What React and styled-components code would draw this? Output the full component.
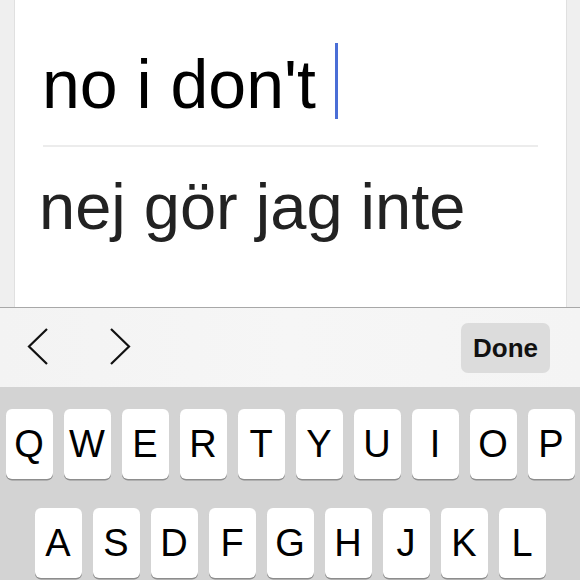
import React from 'react'
import styled, { createGlobalStyle } from 'styled-components'

const rows = [
    ['Q', 'W', 'E', 'R', 'T', 'Y', 'U', 'I', 'O', 'P'],
    ['A', 'S', 'D', 'F', 'G', 'H', 'J', 'K', 'L'],
]

export default function App() {
    return (
        <>
            <GlobalStyle />
            <Screen>
                <CardArea>
                    <Card>
                        <InputRow>
                            <InputText>no i don't</InputText>
                            <Caret />
                        </InputRow>
                        <Divider />
                        <Translation>nej gör jag inte</Translation>
                    </Card>
                </CardArea>
                <Toolbar>
                    <ArrowButton aria-label="previous">
                        <svg width="22" height="37" viewBox="0 0 22 37">
                            <polyline points="20,1 2,18.5 20,36" fill="none" stroke="#111" strokeWidth="2.2" />
                        </svg>
                    </ArrowButton>
                    <ArrowButton aria-label="next">
                        <svg width="22" height="37" viewBox="0 0 22 37">
                            <polyline points="2,1 20,18.5 2,36" fill="none" stroke="#111" strokeWidth="2.2" />
                        </svg>
                    </ArrowButton>
                    <Spacer />
                    <DoneButton>Done</DoneButton>
                </Toolbar>
                <Keyboard>
                    {rows.map((row, i) => (
                        <KeyRow key={i}>
                            {row.map(k => (
                                <Key key={k}>{k}</Key>
                            ))}
                        </KeyRow>
                    ))}
                </Keyboard>
            </Screen>
        </>
    )
}

const GlobalStyle = createGlobalStyle`
    body {
        margin: 0;
        font-family: "Liberation Sans", Arial, sans-serif;
        background: #d3d3d3;
    }
`

const Screen = styled.div`
    width: 580px;
    height: 580px;
    overflow: hidden;
    display: flex;
    flex-direction: column;
`

const CardArea = styled.div`
    height: 307px;
    flex-shrink: 0;
    background: #efefef;
    padding: 0 13px 0 14px;
    display: flex;
`

const Card = styled.div`
    flex: 1;
    background: #fff;
    border-left: 1px solid #e0e0e0;
    border-right: 1px solid #e0e0e0;
    padding: 46px 28px 0;
`

const InputRow = styled.div`
    display: flex;
    align-items: flex-start;
`

const InputText = styled.span`
    font-size: 68px;
    line-height: 76px;
    color: #000;
    margin-left: -1px;
`

const Caret = styled.span`
    width: 3px;
    height: 76px;
    margin: -3px 0 0 19px;
    background: #4a6ed6;
`

const Divider = styled.div`
    height: 2px;
    background: #ececec;
    margin-top: 23px;
`

const Translation = styled.div`
    font-size: 65px;
    line-height: 72px;
    color: #222;
    margin: 24px 0 0 -4px;
`

const Toolbar = styled.div`
    height: 79px;
    flex-shrink: 0;
    border-top: 1px solid #a8a8a8;
    background: linear-gradient(90deg, #f3f3f3, #f6f6f6 50%, #f4f4f4);
    display: flex;
    align-items: center;
    padding: 0 30px 0 27px;
    gap: 60px;
`

const ArrowButton = styled.div`
    display: flex;
    align-items: center;
    margin-top: -2px;
`

const Spacer = styled.div`
    flex: 1;
`

const DoneButton = styled.div`
    width: 89px;
    height: 50px;
    border-radius: 7px;
    background: #dcdcdc;
    display: flex;
    align-items: center;
    justify-content: center;
    font-size: 26px;
    font-weight: 700;
    color: #111;
    margin-top: 1px;
`

const Keyboard = styled.div`
    flex: 1;
    background: #d3d3d3;
    padding-top: 22px;
    display: flex;
    flex-direction: column;
    gap: 29px;
`

const KeyRow = styled.div`
    display: flex;
    justify-content: center;
    gap: 11px;
`

const Key = styled.div`
    width: 47px;
    height: 70px;
    flex-shrink: 0;
    background: #fff;
    border-radius: 6px;
    box-shadow: 0 1.5px 0 #8d8d8d;
    display: flex;
    align-items: center;
    justify-content: center;
    font-size: 38px;
    color: #000;
`
